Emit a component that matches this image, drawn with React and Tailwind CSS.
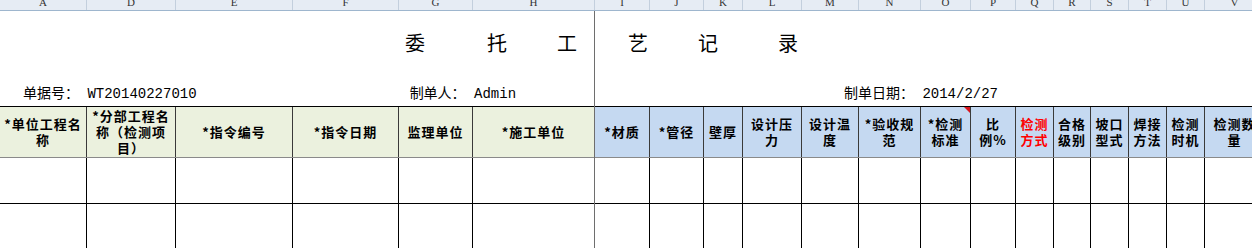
import React from 'react';

const letters = [
  ['A', 87], ['D', 89], ['E', 117], ['F', 106], ['G', 74], ['H', 122],
  ['I', 55], ['J', 54], ['K', 39], ['L', 59], ['M', 57], ['N', 62], ['O', 50],
  ['P', 45], ['Q', 38], ['R', 37], ['S', 38], ['T', 38], ['U', 38], ['V', 60],
];

// left pane (frozen) columns A-H
const leftCols = [
  { w: 'w-[87px]', lines: ['*单位工程名', '称'] },
  { w: 'w-[89px]', lines: ['*分部工程名', '称（检测项', '目）'] },
  { w: 'w-[117px]', lines: ['*指令编号'] },
  { w: 'w-[106px]', lines: ['*指令日期'] },
  { w: 'w-[74px]', lines: ['监理单位'] },
  { w: 'w-[121px]', lines: ['*施工单位'], last: true },
];

// right pane columns I-V
const rightCols = [
  { w: 'w-[55px]', lines: ['*材质'] },
  { w: 'w-[54px]', lines: ['*管径'] },
  { w: 'w-[39px]', lines: ['壁厚'] },
  { w: 'w-[59px]', lines: ['设计压', '力'] },
  { w: 'w-[57px]', lines: ['设计温', '度'] },
  { w: 'w-[62px]', lines: ['*验收规', '范'] },
  { w: 'w-[50px]', lines: ['*检测', '标准'], note: true },
  { w: 'w-[45px]', lines: ['比', '例%'] },
  { w: 'w-[38px]', lines: ['检测', '方式'], red: true },
  { w: 'w-[37px]', lines: ['合格', '级别'] },
  { w: 'w-[38px]', lines: ['坡口', '型式'] },
  { w: 'w-[38px]', lines: ['焊接', '方法'] },
  { w: 'w-[38px]', lines: ['检测', '时机'] },
  { w: 'w-[60px]', lines: ['检测数', '量'] },
];

const cjk = { fontFamily: '"Noto Sans CJK SC", "Noto Sans", sans-serif' };
const mono = { fontFamily: '"Liberation Mono", "Noto Sans CJK SC", monospace' };

function HeaderRow({ cols, bg }) {
  return (
    <div className="flex h-[52px] border-t border-b border-t-black border-b-[#8a8a8a]">
      {cols.map((c, i) => (
        <div
          key={i}
          className={`${c.w} shrink-0 relative flex items-center justify-center ${bg} ${c.last ? '' : 'border-r border-[#3a3a3a]'}`}
        >
          <span
            className={`text-[13px] leading-[16px] font-bold tracking-[1px] text-center whitespace-nowrap ${c.red ? 'text-[#ff0000]' : 'text-black'}`}
            style={cjk}
          >
            {c.lines.map((l, j) => (
              <React.Fragment key={j}>
                {j > 0 && <br />}
                {l}
              </React.Fragment>
            ))}
          </span>
          {c.note && (
            <svg className="absolute top-0 right-0" width="6" height="6" viewBox="0 0 6 6">
              <polygon points="0,0 6,0 6,6" fill="#d9141b" />
            </svg>
          )}
        </div>
      ))}
    </div>
  );
}

function DataRows({ cols }) {
  return [0, 1].map((r) => (
    <div key={r} className="flex h-[46px] border-b border-black">
      {cols.map((c, i) => (
        <div key={i} className={`${c.w} shrink-0 bg-white ${c.last ? '' : 'border-r border-black'}`} />
      ))}
    </div>
  ));
}

export default function App() {
  return (
    <div className="w-[1252px] h-[248px] overflow-hidden bg-white">
      {/* column letters */}
      <div className="flex h-[11px] border-b border-[#9eb6ce] bg-[#e6ecf4]">
        {letters.map(([l, w]) => (
          <div
            key={l}
            className="shrink-0 h-[10px] flex items-end justify-center overflow-hidden border-r border-[#c3cfdd] pb-[2px]"
            style={{ width: w }}
          >
            <span
              className="text-[11px] leading-none text-[#333333]"
              style={{ fontFamily: '"Liberation Serif", serif' }}
            >
              {l}
            </span>
          </div>
        ))}
      </div>

      <div className="flex">
        {/* frozen pane */}
        <div className="w-[595px] shrink-0 border-r border-[#6e6e6e]">
          <div className="h-[68px] flex items-center pl-[405px] pb-[5px] text-[20px] text-black" style={cjk}>
            <span>委</span>
            <span className="ml-[62px]">托</span>
            <span className="ml-[50px]">工</span>
          </div>
          <div className="h-[27px] flex items-center pt-[3px] text-[14px] text-black" style={mono}>
            <span className="pl-[23px]">单据号： WT20140227010</span>
            <span className="pl-[213px]">制单人： Admin</span>
          </div>
          <HeaderRow cols={leftCols} bg="bg-[#ebf1de]" />
          <DataRows cols={leftCols} />
        </div>

        {/* scrolling pane */}
        <div className="shrink-0">
          <div className="h-[68px] flex items-center pl-[33px] pb-[5px] text-[20px] text-black" style={cjk}>
            <span>艺</span>
            <span className="ml-[50px]">记</span>
            <span className="ml-[60px]">录</span>
          </div>
          <div className="h-[27px] flex items-center pt-[3px] text-[14px] text-black" style={mono}>
            <span className="pl-[249px]">制单日期： 2014/2/27</span>
          </div>
          <HeaderRow cols={rightCols} bg="bg-[#c5d9f1]" />
          <DataRows cols={rightCols} />
        </div>
      </div>
    </div>
  );
}
